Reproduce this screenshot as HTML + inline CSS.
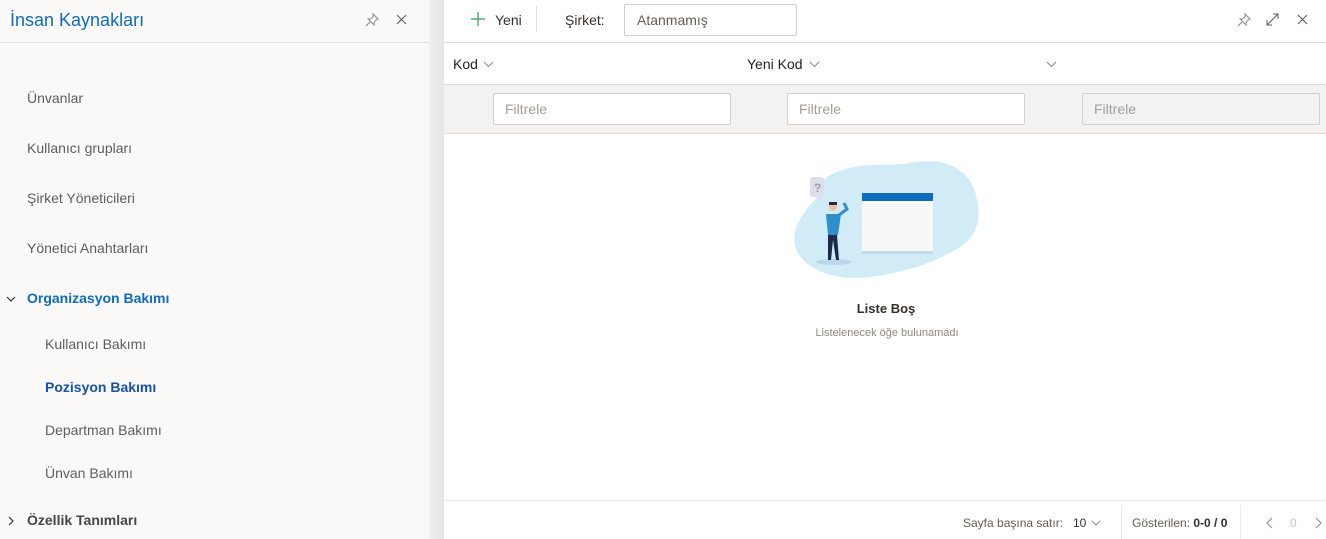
<!DOCTYPE html>
<html><head><meta charset="utf-8"><style>
*{box-sizing:border-box;margin:0;padding:0}
body{width:1326px;height:539px;overflow:hidden;font-family:"Segoe UI","Liberation Sans",sans-serif;font-size:14px;background:#fff;position:relative;color:#323130}
.abs{position:absolute}
#side{left:0;top:0;width:429px;height:539px;background:#faf9f8}
#gap{left:429px;top:0;width:15px;height:539px;background:linear-gradient(90deg,#f0efee,#e6e5e4)}
.item{position:absolute;left:27px;font-size:14px;color:#605e5c}
.sub{left:45px}
.inp{position:absolute;border:1px solid #d2d0ce;border-radius:2px;background:#fff;color:#a19f9d;font-size:14px;padding:7px 11px;height:32px;top:93px;width:238px}
</style></head><body>
<div id="side" class="abs">
 <div class="abs" style="left:10px;top:10px;font-size:18px;color:#0f6cbd">İnsan Kaynakları</div>
 <svg class="abs" style="left:365px;top:13px" width="14" height="14" viewBox="0 0 14 14" fill="none" stroke="#8a8886" stroke-width="1"><path d="M8 1l5 5-2 1-2 3 0 2-6-6 2 0 3-2z M5 9l-4 4"/></svg>
 <svg class="abs" style="left:396px;top:14px" width="11" height="11" viewBox="0 0 11 11" stroke="#605e5c" stroke-width="1.1"><path d="M1 1l9 9M10 1l-9 9"/></svg>
 <div class="abs" style="left:0;top:42px;width:429px;height:1px;background:#e1dfdd"></div>
 <div class="item" style="top:90px">Ünvanlar</div>
 <div class="item" style="top:140px">Kullanıcı grupları</div>
 <div class="item" style="top:190px">Şirket Yöneticileri</div>
 <div class="item" style="top:240px">Yönetici Anahtarları</div>
 <svg class="abs" style="left:6px;top:295px" width="10" height="8" viewBox="0 0 10 8" fill="none" stroke="#323130" stroke-width="1.2"><path d="M1 2l4 4 4-4"/></svg>
 <div class="item" style="top:290px;color:#0f6cbd;font-weight:bold">Organizasyon Bakımı</div>
 <div class="item sub" style="top:336px">Kullanıcı Bakımı</div>
 <div class="item sub" style="top:379px;color:#1650a8;font-weight:bold">Pozisyon Bakımı</div>
 <div class="item sub" style="top:422px">Departman Bakımı</div>
 <div class="item sub" style="top:465px">Ünvan Bakımı</div>
 <svg class="abs" style="left:7px;top:516px" width="8" height="10" viewBox="0 0 8 10" fill="none" stroke="#323130" stroke-width="1.2"><path d="M2 1l4 4-4 4"/></svg>
 <div class="item" style="top:512px;color:#484644;font-weight:bold">Özellik Tanımları</div>
</div>
<div id="gap" class="abs"></div>
<svg class="abs" style="left:470px;top:11px" width="16" height="16" viewBox="0 0 16 16" stroke="#2e9e5b" stroke-width="1.2"><path d="M8 1v14M1 8h14"/></svg>
<div class="abs" style="left:495px;top:12px;font-size:14px">Yeni</div>
<div class="abs" style="left:536px;top:6px;width:1px;height:26px;background:#e1dfdd"></div>
<div class="abs" style="left:565px;top:12px;font-size:14px">Şirket:</div>
<div class="abs" style="left:624px;top:4px;width:173px;height:32px;border:1px solid #d2d0ce;border-radius:2px;padding:7px 12px;color:#605e5c">Atanmamış</div>
<svg class="abs" style="left:1237px;top:13px" width="14" height="14" viewBox="0 0 14 14" fill="none" stroke="#8a8886" stroke-width="1"><path d="M8 1l5 5-2 1-2 3 0 2-6-6 2 0 3-2z M5 9l-4 4"/></svg>
<svg class="abs" style="left:1266px;top:13px" width="13" height="13" viewBox="0 0 13 13" fill="none" stroke="#605e5c" stroke-width="1"><path d="M1 12L12 1M7 1h5v5M1 7v5h5"/></svg>
<svg class="abs" style="left:1297px;top:14px" width="11" height="11" viewBox="0 0 11 11" stroke="#605e5c" stroke-width="1.1"><path d="M1 1l9 9M10 1l-9 9"/></svg>
<div class="abs" style="left:444px;top:42px;width:882px;height:1px;background:#e1dfdd"></div>
<div class="abs" style="left:453px;top:56px;font-size:14px;color:#201f1e">Kod</div>
<svg class="abs" style="left:483px;top:61px" width="11" height="7" viewBox="0 0 11 7" fill="none" stroke="#8a8886"><path d="M1 1l4.5 4.5L10 1"/></svg>
<div class="abs" style="left:747px;top:56px;font-size:14px;color:#201f1e">Yeni Kod</div>
<svg class="abs" style="left:809px;top:61px" width="11" height="7" viewBox="0 0 11 7" fill="none" stroke="#8a8886"><path d="M1 1l4.5 4.5L10 1"/></svg>
<svg class="abs" style="left:1046px;top:61px" width="11" height="7" viewBox="0 0 11 7" fill="none" stroke="#8a8886"><path d="M1 1l4.5 4.5L10 1"/></svg>
<div class="abs" style="left:444px;top:84px;width:882px;height:50px;background:#f3f2f1;border-top:1px solid #e1dfdd;border-bottom:1px solid #e1dfdd"></div>
<div class="inp" style="left:493px">Filtrele</div>
<div class="inp" style="left:787px">Filtrele</div>
<div class="inp" style="left:1082px;background:#f3f2f1">Filtrele</div>
<svg class="abs" style="left:790px;top:155px" width="192" height="125" viewBox="0 0 192 125">
 <path d="M40 20C70 5 100 12 120 8C150 2 178 10 186 40C193 65 186 85 165 95C140 110 110 118 80 122C50 126 20 118 8 98C-2 80 10 60 25 45C32 35 30 26 40 20Z" fill="#d2ecf7"/>
 <ellipse cx="44" cy="107" rx="18" ry="3" fill="#b9d9ea"/>
 <rect x="20" y="22" width="14" height="20" rx="3" fill="#dcdee8"/>
 <path d="M28 42l3 6 0-6z" fill="#dcdee8"/>
 <text x="24" y="37" font-size="12" font-weight="bold" fill="#9aa0b5" font-family="Liberation Sans">?</text>
 <rect x="72" y="38" width="71" height="58" fill="#f8f8f8"/>
 <rect x="72" y="38" width="71" height="8" fill="#0f6cbd"/>
 <rect x="72" y="96" width="71" height="3" fill="#c6dbe8"/>
 <circle cx="43" cy="52" r="4" fill="#f0c2a0"/>
 <path d="M39 47h8v3h-8z" fill="#1b2a4a"/>
 <path d="M36 59h15l-3 21h-10z" fill="#2e8fcb"/>
 <path d="M49 60l8-6-3-6" stroke="#2e8fcb" stroke-width="3" fill="none"/>
 <path d="M38 80h9l2 25h-3l-3-20-2 20h-3z" fill="#1b2a4a"/>
</svg>
<div class="abs" style="left:0;width:1772px;top:301px;text-align:center;font-size:13px;font-weight:bold;color:#323130">Liste Boş</div>
<div class="abs" style="left:0;width:1774px;top:327px;text-align:center;font-size:11px;color:#8a8886">Listelenecek öğe bulunamadı</div>
<div class="abs" style="left:444px;top:500px;width:882px;height:1px;background:#edebe9"></div>
<div class="abs" style="left:963px;top:516px;font-size:12px;color:#605e5c">Sayfa başına satır:</div>
<div class="abs" style="left:1073px;top:516px;font-size:12px;color:#323130">10</div>
<svg class="abs" style="left:1091px;top:520px" width="10" height="6" viewBox="0 0 10 6" fill="none" stroke="#8a8886"><path d="M1 1l4 4 4-4"/></svg>
<div class="abs" style="left:1121px;top:505px;width:1px;height:34px;background:#edebe9"></div>
<div class="abs" style="left:1132px;top:516px;font-size:12px;color:#605e5c">Gösterilen: <b style="color:#323130">0-0 / 0</b></div>
<div class="abs" style="left:1240px;top:505px;width:1px;height:34px;background:#edebe9"></div>
<svg class="abs" style="left:1266px;top:517px" width="8" height="12" viewBox="0 0 8 12" fill="none" stroke="#8a8886"><path d="M6 1L1 6l5 5"/></svg>
<div class="abs" style="left:1290px;top:516px;font-size:12px;color:#c8c6c4">0</div>
<svg class="abs" style="left:1314px;top:517px" width="8" height="12" viewBox="0 0 8 12" fill="none" stroke="#8a8886"><path d="M2 1l5 5-5 5"/></svg>
</body></html>
